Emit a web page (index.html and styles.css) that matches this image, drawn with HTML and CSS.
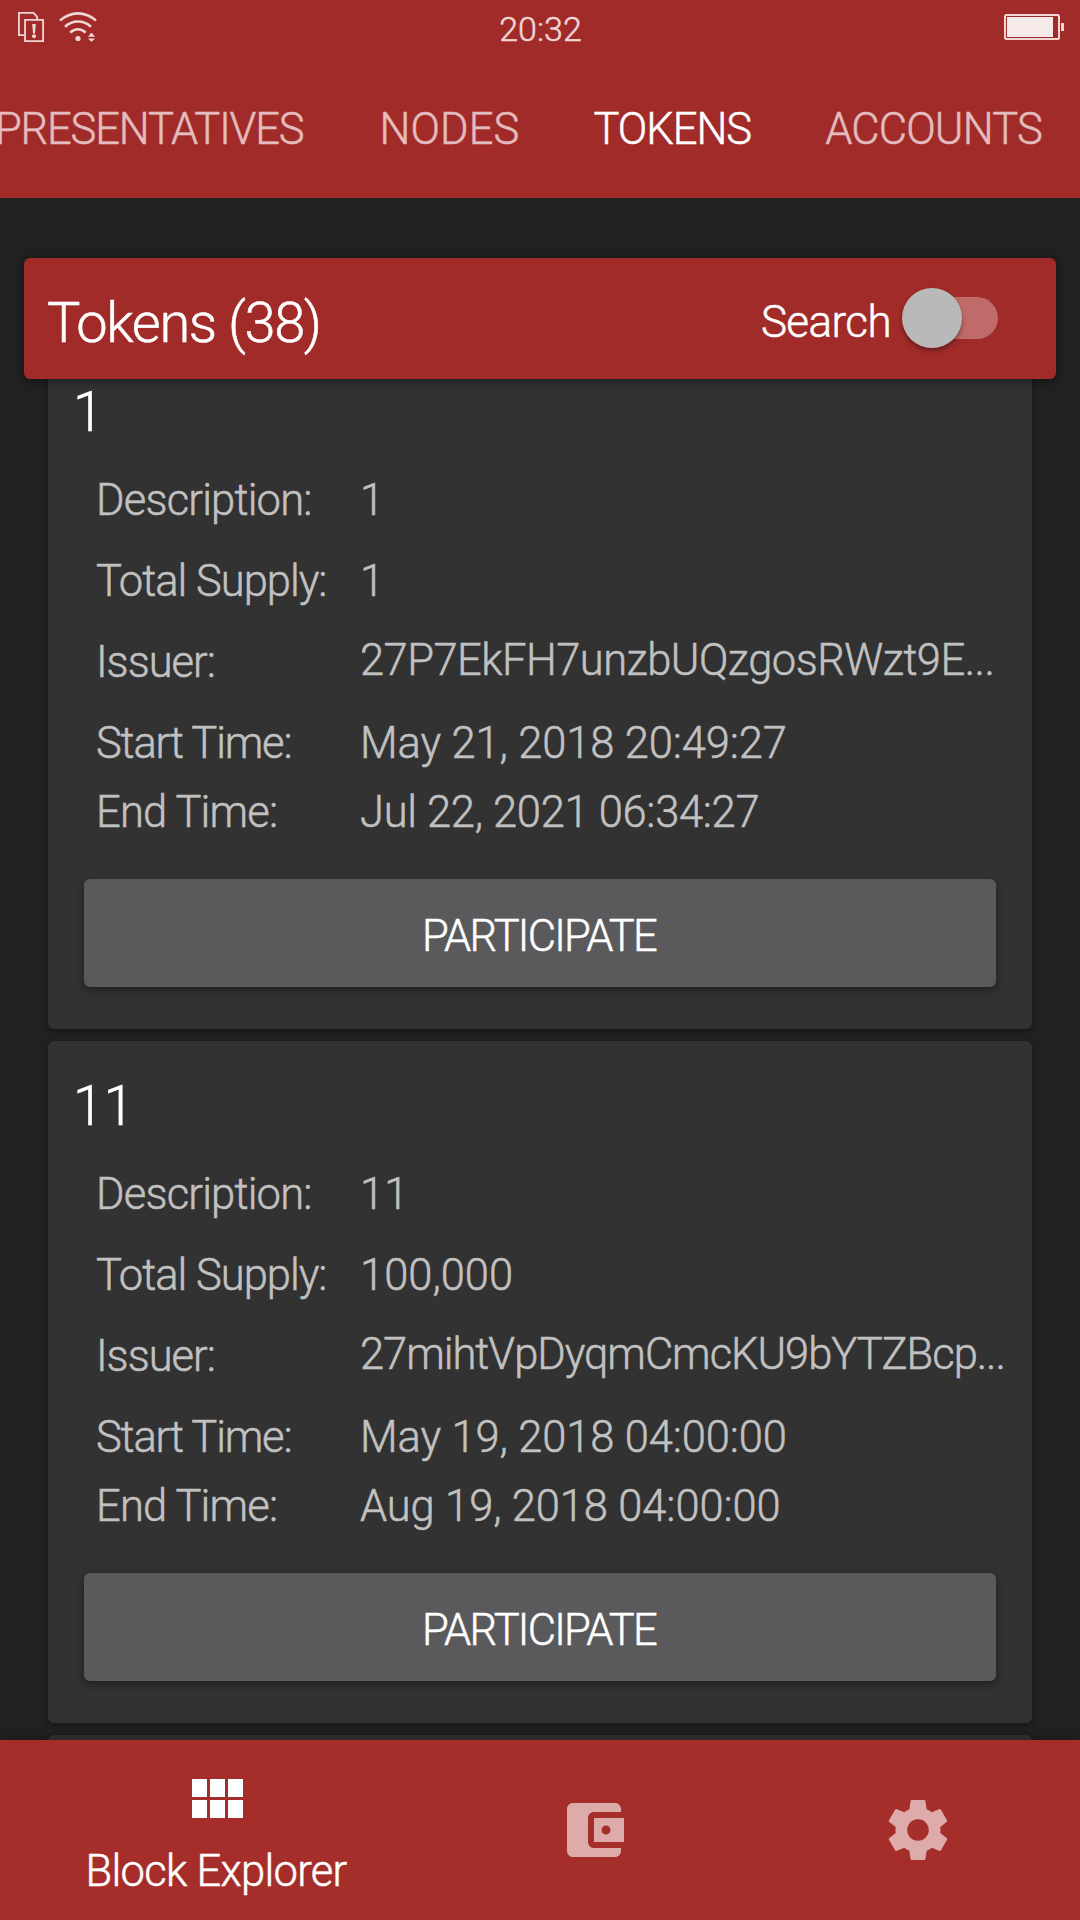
FILE: index.html
```html
<!DOCTYPE html>
<html lang="en">
<head>
<meta charset="utf-8">
<title>Tokens</title>
<link rel="stylesheet" href="styles.css">
</head>
<body>
<div class="screen">
  <header class="appbar">
    <div class="status">
      <div class="status-left">
        <svg class="icon-sim" width="26" height="30" viewBox="0 0 26 30" fill="none" stroke="currentColor" stroke-width="1.8">
          <path d="M6.2 23.1H.9V.9H15.500L19 4.500V7.500"/>
          <path d="M7 7.900H25.100V29.100H7Z"/>
          <path d="M14.200 12H17.800L17 21.500H15Z" fill="currentColor" stroke="none"/>
          <circle cx="16" cy="24.200" r="2" fill="currentColor" stroke="none"/>
        </svg>
        <svg class="icon-wifi" width="38" height="30" viewBox="0 0 38 30" fill="none" stroke="currentColor" stroke-width="2.600">
          <path d="M1 8.600C12-1 26-1 37 8.600"/>
          <path d="M6 14.700C13.500 7.800 24.500 7.800 32 14.700"/>
          <path d="M11.200 20.600C16 16.300 22 16.300 26.700 20.600"/>
          <circle cx="19" cy="26.500" r="2.600" fill="currentColor" stroke="none"/>
          <path d="M29 24.800L32 21H33L36 24.800ZM29 26.400L32 29.600H33L36 26.400Z" fill="currentColor" stroke="none"/>
        </svg>
      </div>
      <div class="clock">20:32</div>
      <div class="status-right">
        <svg class="icon-battery" width="60" height="26" viewBox="0 0 60 26">
          <rect x="1" y="1" width="54" height="24" rx="1.500" fill="none" stroke="currentColor" stroke-width="2"/>
          <rect class="charge" x="3" y="3" width="46" height="20"/>
          <rect x="57" y="9" width="3" height="8" fill="currentColor"/>
        </svg>
      </div>
    </div>
    <nav class="tabs">
      <a class="tab tab-representatives">REPRESENTATIVES</a>
      <a class="tab tab-nodes">NODES</a>
      <a class="tab tab-tokens active">TOKENS</a>
      <a class="tab tab-accounts">ACCOUNTS</a>
    </nav>
  </header>

  <main class="content">
    <section class="summary">
      <h1 class="summary-title">Tokens (38)</h1>
      <div class="search">
        <span class="search-label">Search</span>
        <span class="switch"><span class="thumb"></span></span>
      </div>
    </section>

    <div class="list">
      <article class="card">
        <h2 class="name">1</h2>
        <dl class="details">
          <div class="row"><dt class="l-desc">Description:</dt><dd>1</dd></div>
          <div class="row"><dt class="l-supply">Total Supply:</dt><dd>1</dd></div>
          <div class="row"><dt class="l-issuer">Issuer:</dt><dd class="address">27P7EkFH7unzbUQzgosRWzt9E...</dd></div>
          <div class="row time"><dt class="l-start">Start Time:</dt><dd class="date">May 21, 2018 20:49:27</dd></div>
          <div class="row time"><dt class="l-end">End Time:</dt><dd class="snug">Jul 22, 2021 06:34:27</dd></div>
        </dl>
        <button class="participate">PARTICIPATE</button>
      </article>
      <article class="card">
        <h2 class="name">11</h2>
        <dl class="details">
          <div class="row"><dt class="l-desc">Description:</dt><dd>11</dd></div>
          <div class="row"><dt class="l-supply">Total Supply:</dt><dd>100,000</dd></div>
          <div class="row"><dt class="l-issuer">Issuer:</dt><dd class="address tight">27mihtVpDyqmCmcKU9bYTZBcp...</dd></div>
          <div class="row time"><dt class="l-start">Start Time:</dt><dd class="date">May 19, 2018 04:00:00</dd></div>
          <div class="row time"><dt class="l-end">End Time:</dt><dd class="date">Aug 19, 2018 04:00:00</dd></div>
        </dl>
        <button class="participate">PARTICIPATE</button>
      </article>
      <article class="card"></article>
    </div>
  </main>

  <nav class="bottombar">
    <a class="item active">
      <svg width="72" height="72" viewBox="0 0 24 24" fill="currentColor"><path d="M4 11h5V5H4v6zm0 7h5v-6H4v6zm6 0h5v-6h-5v6zm6 0h5v-6h-5v6zm-6-7h5V5h-5v6zm6-6v6h5V5h-5z"/></svg>
      <span class="item-label">Block Explorer</span>
    </a>
    <a class="item">
      <svg width="72" height="72" viewBox="0 0 24 24" fill="currentColor"><path d="M21 18v1c0 1.100-.9 2-2 2H5c-1.110 0-2-.9-2-2V5c0-1.100.89-2 2-2h14c1.100 0 2 .9 2 2v1h-9c-1.110 0-2 .9-2 2v8c0 1.100.89 2 2 2h9zm-9-2h10V8H12v8zm4-2.500c-.83 0-1.500-.67-1.500-1.500s.67-1.500 1.500-1.500 1.500.67 1.500 1.500-.67 1.500-1.500 1.500z"/></svg>
    </a>
    <a class="item">
      <svg width="72" height="72" viewBox="0 0 24 24" fill="currentColor"><path d="M19.430 12.980c.04-.32.07-.64.07-.98s-.03-.66-.07-.98l2.110-1.650c.19-.15.24-.42.12-.64l-2-3.460c-.12-.22-.39-.3-.61-.22l-2.490 1c-.52-.4-1.080-.73-1.690-.98l-.38-2.650C14.460 2.180 14.250 2 14 2h-4c-.25 0-.46.18-.49.42l-.38 2.650c-.61.25-1.170.59-1.690.98l-2.490-1c-.23-.09-.49 0-.61.22l-2 3.460c-.13.22-.07.49.12.64l2.110 1.650c-.04.32-.07.65-.07.98s.03.66.07.98l-2.110 1.650c-.19.15-.24.42-.12.64l2 3.460c.12.22.39.3.61.22l2.490-1c.52.4 1.080.73 1.690.98l.38 2.650c.03.24.24.42.49.42h4c.25 0 .46-.18.49-.42l.38-2.650c.61-.25 1.170-.59 1.690-.98l2.490 1c.23.09.49 0 .61-.22l2-3.460c.12-.22.07-.49-.12-.64l-2.110-1.650zM12 15.600c-1.980 0-3.600-1.620-3.600-3.600s1.620-3.600 3.600-3.600 3.600 1.620 3.600 3.600-1.620 3.600-3.600 3.600z"/></svg>
    </a>
  </nav>
</div>
</body>
</html>
```
FILE: styles.css
```css
* { box-sizing: border-box; margin: 0; }

body {
  background: #212121;
  color: #fff;
  font: 300 43.5px Roboto, sans-serif;
  -webkit-text-stroke: .5px currentColor;
}

.screen {
  display: flex;
  flex-direction: column;
  width: 1080px;
  height: 1920px;
  overflow: hidden;
}

.appbar { height: 198px; flex: none; background: #a12b28; }

.status {
  display: grid;
  grid-template-columns: 1fr auto 1fr;
  height: 60px;
  padding: 0 17px 0 18px;
  color: #f0d6d6;
}
.status-left { display: flex; gap: 15px; padding-top: 12px; }
.status-right { display: flex; justify-content: flex-end; margin-right: -1px; padding-top: 14px; }
.clock { font-size: 34px; line-height: 58px; }
.charge { fill: #f6e9e9; }

.tabs {
  display: flex;
  justify-content: flex-end;
  gap: 74px;
  height: 138px;
  padding-right: 38px;
  overflow: hidden;
}
.tab { flex: none; line-height: 140px; color: #e3bcbe; }
.tab.active { color: #fff; }
.tab-representatives { margin-right: 2px; letter-spacing: -1.16px; }
.tab-nodes { letter-spacing: .1px; }
.tab-tokens { letter-spacing: -1px; }
.tab-accounts { letter-spacing: -.8px; }

.content { flex: 1; min-height: 0; padding: 60px 24px 0; overflow: hidden; }

.summary {
  position: relative;
  z-index: 1;
  display: flex;
  justify-content: space-between;
  height: 121px;
  padding: 0 58px 0 23px;
  border-radius: 6px;
  background: #a12b28;
  box-shadow: 0 2px 8px rgba(0, 0, 0, .45);
}
.summary-title {
  padding-top: 9px;
  font-size: 56px;
  font-weight: inherit;
  line-height: 112px;
  letter-spacing: -1.4px;
}
.search { display: flex; }
.search-label { padding-top: 7px; font-size: 44px; line-height: 114px; letter-spacing: -.6px; }
.switch {
  width: 84px;
  height: 42px;
  margin: 39px 0 0 23px;
  border-radius: 21px;
  background: #c06b69;
}
.thumb {
  display: block;
  width: 60px;
  height: 60px;
  margin: -9px 0 0 -12px;
  border-radius: 50%;
  background: #b9b9b9;
  box-shadow: 0 3px 5px rgba(0, 0, 0, .35);
}

.list { display: flex; flex-direction: column; gap: 12px; margin-top: -32px; padding: 0 24px; }

.card {
  flex: none;
  height: 682px;
  padding: 23px 36px 42px;
  border-radius: 6px;
  background: #323232;
  box-shadow: 0 3px 6px rgba(0, 0, 0, .3);
}
.name { margin-left: -11px; font-size: 55px; font-weight: inherit; line-height: 84px; }

.details { padding: 12px 0 0 12px; color: #c1c1c1; line-height: 69px; white-space: nowrap; }
.row { display: grid; grid-template-columns: 264px 1fr; height: 81px; }
.row.time { height: 69px; }
.l-desc { letter-spacing: -.8px; }
.l-supply { letter-spacing: -1px; }
.l-issuer { letter-spacing: -1px; }
.l-start { letter-spacing: -1.2px; }
.l-end { letter-spacing: -.8px; }
.address { line-height: 65px; letter-spacing: -.53px; }
.address.tight { letter-spacing: -1.03px; }
.date { letter-spacing: -.12px; }
.snug { letter-spacing: -.3px; }

.participate {
  display: block;
  width: 100%;
  height: 108px;
  margin-top: 32px;
  padding: 6px 2px 0 0;
  border: 0;
  border-radius: 6px;
  background: #5a5a5c;
  box-shadow: 0 4px 8px rgba(0, 0, 0, .35);
  color: #fff;
  font: inherit;
  letter-spacing: -1.75px;
}

.bottombar {
  position: relative;
  z-index: 2;
  display: grid;
  grid-template-columns: 432px 324px 324px;
  flex: none;
  height: 180px;
  background: #a52e2b;
  box-shadow: 0 -2px 8px rgba(0, 0, 0, .25);
}
.item { display: flex; flex-direction: column; align-items: center; padding-top: 54px; color: #dcabaa; }
.item.active { padding-top: 24px; color: #fff; }
.item-label { margin-top: 6px; line-height: 60px; letter-spacing: -.7px; }
```
